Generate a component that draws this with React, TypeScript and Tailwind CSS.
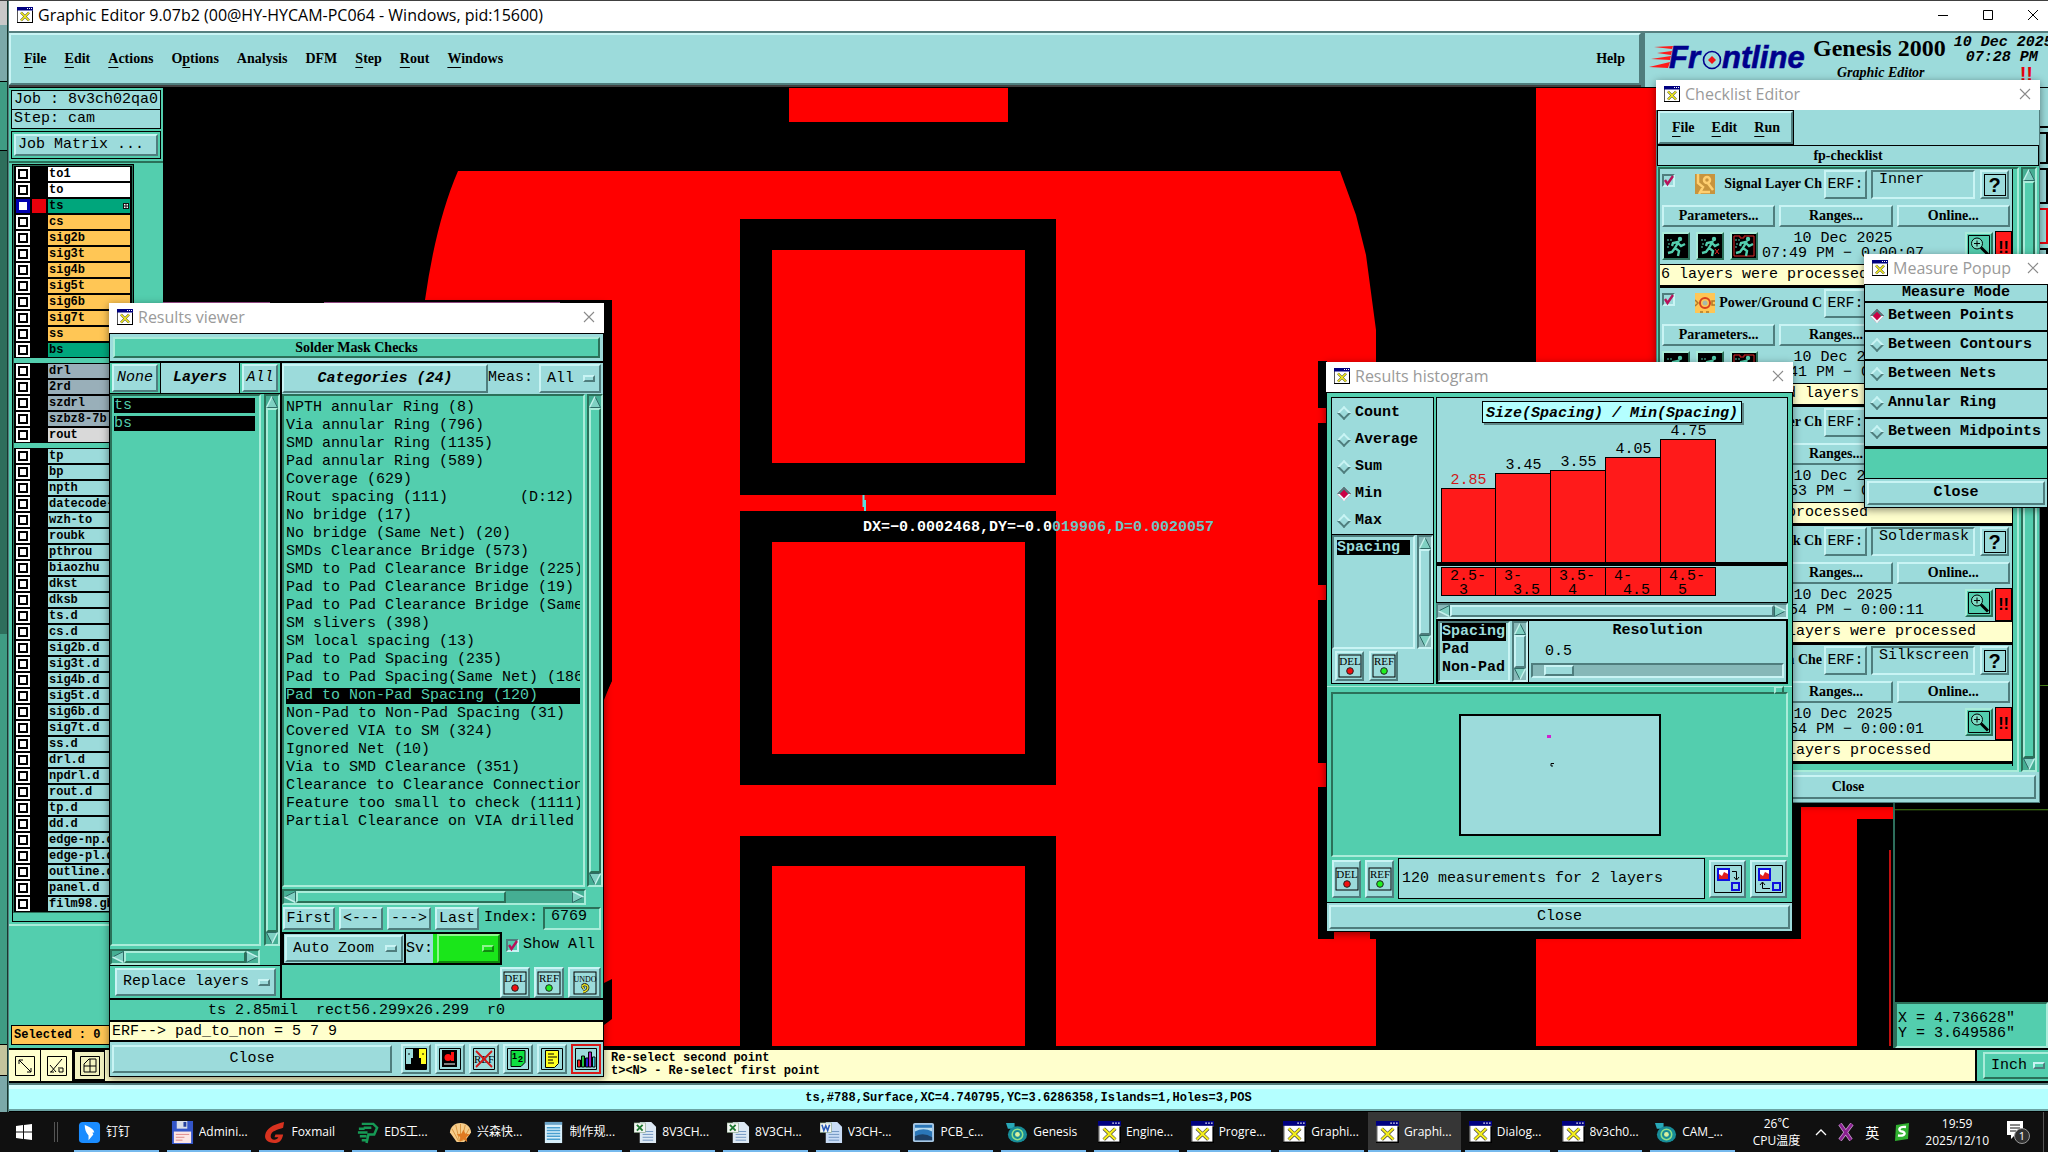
import type { ReactNode } from "react";
import { clsx } from "clsx";

const MONO = "[font-family:'Liberation_Mono','Noto_Sans_CJK_SC',monospace] text-[15px]";
const MONO_SM = "[font-family:'Liberation_Mono',monospace] text-[12px] font-bold";
const SERIF = "[font-family:'Liberation_Serif',serif] text-[14px] font-bold";
const UI = "[font-family:'Open_Sans','Noto_Sans_CJK_SC',sans-serif]";

// Motif style bevels
const RAISED = "border-2 border-t-[#c9f4f4] border-l-[#c9f4f4] border-b-[#4f7d7d] border-r-[#4f7d7d] bg-[#9cdbdb]";
const SUNKEN = "border-2 border-t-[#4f7d7d] border-l-[#4f7d7d] border-b-[#c9f4f4] border-r-[#c9f4f4]";
const RAISED_G = "border-2 border-t-[#a9ecd9] border-l-[#a9ecd9] border-b-[#2b7059] border-r-[#2b7059] bg-[#53ceae]";
const SUNKEN_G = "border-2 border-t-[#2b7059] border-l-[#2b7059] border-b-[#a9ecd9] border-r-[#a9ecd9]";

type Tone = "green" | "cyan";

/* ===== Shared pieces ===== */

function XIcon({ className = "h-4 w-4" }: { className?: string }) {
  return (
    <svg viewBox="0 0 16 16" className={className} preserveAspectRatio="none">
      <rect x="0.5" y="0.5" width="15" height="15" fill="#fff" stroke="#555" />
      <rect x="0" y="0" width="16" height="3.5" fill="#000080" />
      <path d="M10 1.5h1M12 1.5h1M14 1.5h1" stroke="#fff" />
      <path d="M4 5.5l8 8M12 5.5l-8 8" stroke="#333" strokeWidth="2.4" />
      <path d="M4 5.5l8 8M12 5.5l-8 8" stroke="#f4ee1c" strokeWidth="1.6" />
      <path d="M15.5 4v12M0 15.5h16" stroke="#000" />
    </svg>
  );
}

function AppWindow({ title, className, children }: { title: string; className: string; children: ReactNode }) {
  return (
    <section className={clsx("absolute flex flex-col shadow-[0_2px_8px_rgba(0,0,0,0.45)]", className)}>
      <header className="flex h-[30px] shrink-0 items-center gap-[5px] bg-white pb-[2px] pl-2">
        <XIcon />
        <h2 className={clsx(UI, "flex-1 text-[16px] leading-5 whitespace-nowrap text-[#9a9a9a]")}>{title}</h2>
        <button type="button" aria-label={`Close ${title}`} className="grid h-7 w-[30px] place-items-center">
          <svg viewBox="0 0 12 12" className="h-3 w-3">
            <path d="M1 1l10 10M11 1L1 11" stroke="#8a8a8a" strokeWidth="1.1" />
          </svg>
        </button>
      </header>
      {children}
    </section>
  );
}

function Arrow({ dir }: { dir: "up" | "down" | "left" | "right" }) {
  return (
    <svg
      viewBox="0 0 12 12"
      className={clsx(
        "h-3 w-3 shrink-0",
        dir === "down" && "rotate-180",
        dir === "left" && "-rotate-90",
        dir === "right" && "rotate-90",
      )}
    >
      <path d="M6 0.5L11.5 11.5H0.5z" fill="#7fd0c2" />
      <path d="M0.5 11.5H11.5L6 0.5" fill="none" stroke="#2f6b66" />
      <path d="M6 0.5L0.5 11.5" fill="none" stroke="#c4f2ec" strokeWidth="1.4" />
    </svg>
  );
}

function ScrollBar({
  horizontal = false,
  tone = "green",
  size = 100,
  className,
}: {
  horizontal?: boolean;
  tone?: Tone;
  size?: number;
  className?: string;
}) {
  const green = tone === "green";
  return (
    <div
      className={clsx(
        "flex shrink-0",
        horizontal ? "h-4" : "w-4 flex-col",
        green ? SUNKEN_G : SUNKEN,
        green ? "bg-[#45ae93]" : "bg-[#86b8b8]",
        className,
      )}
    >
      <Arrow dir={horizontal ? "left" : "up"} />
      <div className="min-h-0 min-w-0 flex-1">
        <div
          className={green ? RAISED_G : RAISED}
          style={horizontal ? { width: `${size}%`, height: "100%" } : { height: `${size}%`, width: "100%" }}
        />
      </div>
      <Arrow dir={horizontal ? "right" : "down"} />
    </div>
  );
}

function Btn({ className, children, label }: { className?: string; children: ReactNode; label?: string }) {
  return (
    <button
      type="button"
      aria-label={label}
      className={clsx("grid place-items-center leading-4 whitespace-nowrap", RAISED, className)}
    >
      {children}
    </button>
  );
}

function OptionMenu({
  label,
  options,
  className,
  tone = "cyan",
}: {
  label: string;
  options: string[];
  className: string;
  tone?: "cyan" | "green" | "lime";
}) {
  return (
    <span className={clsx("grid items-center", className)}>
      <select
        aria-label={label}
        className={clsx(
          "h-full w-full appearance-none truncate pl-[6px] leading-4 outline-none [grid-area:1/1]",
          tone === "cyan" && RAISED,
          tone === "green" && RAISED_G,
          tone === "lime" &&
            "border-2 border-t-[#8df58d] border-r-[#0f8a0f] border-b-[#0f8a0f] border-l-[#8df58d] bg-[#1ae61a]",
        )}
      >
        {options.map((o) => (
          <option key={o}>{o}</option>
        ))}
      </select>
      <span
        className={clsx(
          "pointer-events-none mr-[6px] h-[7px] w-3 justify-self-end border-2 [grid-area:1/1]",
          tone === "lime"
            ? "border-t-[#8df58d] border-r-[#0f8a0f] border-b-[#0f8a0f] border-l-[#8df58d]"
            : "border-t-[#c9f4f4] border-r-[#4f7d7d] border-b-[#4f7d7d] border-l-[#c9f4f4]",
        )}
      />
    </span>
  );
}

function Tick({ id, label }: { id: string; label?: string }) {
  return (
    <span className="grid h-[13px] w-[13px] shrink-0">
      <input
        id={id}
        type="checkbox"
        defaultChecked
        aria-label={label}
        className={clsx("h-[13px] w-[13px] appearance-none [grid-area:1/1]", SUNKEN)}
      />
      <svg viewBox="0 0 13 13" className="pointer-events-none h-[13px] w-[13px] [grid-area:1/1]">
        <path d="M3 6l2.5 4L11 2" fill="none" stroke="#b8125a" strokeWidth="2.4" />
      </svg>
    </span>
  );
}

function Radio({ name, label, checked = false }: { name: string; label: string; checked?: boolean }) {
  return (
    <label className="flex items-center gap-[6px] leading-[18px] font-bold">
      <input
        type="radio"
        name={name}
        defaultChecked={checked}
        className="ml-[3px] h-[10px] w-[10px] shrink-0 rotate-45 appearance-none border-2 border-t-[#c9f4f4] border-r-[#4f7d7d] border-b-[#4f7d7d] border-l-[#c9f4f4] checked:border-t-[#4f7d7d] checked:border-r-[#e9fbfb] checked:border-b-[#e9fbfb] checked:border-l-[#4f7d7d] checked:bg-[#cc0044]"
      />
      {label}
    </label>
  );
}

function StampIcon({ text, kind }: { text: string; kind: "red" | "green" | "undo" }) {
  return (
    <svg viewBox="0 0 24 24" className="h-6 w-6">
      <rect x="1" y="1" width="22" height="22" fill="none" stroke="#000" />
      <text
        x="12"
        y="11"
        textAnchor="middle"
        fontSize={text.length > 3 ? 8 : 11}
        fontFamily="Liberation Serif, serif"
        fill="#000"
      >
        {text}
      </text>
      {kind === "undo" ? (
        <>
          <path d="M9 15c3-3 8 0 5 4-1 1-2 2-4 2M9 15l3-2M9 15l2 3" fill="none" stroke="#222" strokeWidth="3" />
          <path d="M9 15c3-3 8 0 5 4-1 1-2 2-4 2M9 15l3-2M9 15l2 3" fill="none" stroke="#e8e020" strokeWidth="1.4" />
        </>
      ) : (
        <circle cx="12" cy="17" r="3.3" fill={kind === "red" ? "#f01010" : "#20f020"} stroke="#222" />
      )}
    </svg>
  );
}

function MenuWord({ text, hot = 0 }: { text: string; hot?: number | null }) {
  if (hot === null) return <button type="button">{text}</button>;
  return (
    <button type="button">
      {text.slice(0, hot)}
      <span className="underline underline-offset-4">{text[hot]}</span>
      {text.slice(hot + 1)}
    </button>
  );
}

/* ===== Main window header ===== */

function FrontlineLogo() {
  return (
    <svg viewBox="0 0 162 30" className="h-[30px] w-[162px] shrink-0" role="img" aria-label="Frontline">
      <path d="M5 4l19-1-1 3zM8 10l15-2-1 4zM2 16l20-3-1 4zM0 24l21-5-2 6z" fill="#ff1a1a" />
      <g
        fontFamily="Liberation Sans, sans-serif"
        fontWeight="bold"
        fontStyle="italic"
        fontSize="31"
        fill="#00008c"
        stroke="#00008c"
        strokeWidth="0.6"
      >
        <text x="20" y="25">Fr</text>
        <text x="73" y="25">ntline</text>
      </g>
      <circle cx="63" cy="17" r="8.5" fill="none" stroke="#00008c" strokeWidth="1.6" />
      <path d="M63 13l4 4-4 4-4-4z" fill="#f01515" />
    </svg>
  );
}

function MainHeader() {
  return (
    <>
      <header className="flex h-[30px] shrink-0 items-center gap-[5px] bg-white pb-[2px] pl-2">
        <XIcon />
        <h1 className={clsx(UI, "flex-1 text-[16px] leading-5 whitespace-nowrap text-black")}>
          Graphic Editor 9.07b2 (00@HY-HYCAM-PC064 - Windows, pid:15600)
        </h1>
        <div className="-mr-[7px] flex">
          <button type="button" aria-label="Minimize" className="grid h-7 w-[45px] place-items-center">
            <svg viewBox="0 0 12 12" className="h-3 w-3"><path d="M1 6.5h10" stroke="#000" /></svg>
          </button>
          <button type="button" aria-label="Maximize" className="grid h-7 w-[45px] place-items-center">
            <svg viewBox="0 0 12 12" className="h-3 w-3"><path d="M1.5 1.5h9v9h-9z" fill="none" stroke="#000" /></svg>
          </button>
          <button type="button" aria-label="Close" className="grid h-7 w-[45px] place-items-center">
            <svg viewBox="0 0 12 12" className="h-3 w-3"><path d="M1 1l10 10M11 1L1 11" stroke="#000" /></svg>
          </button>
        </div>
      </header>
      <div className="flex h-[57px] shrink-0 border-t-2 border-b border-t-[#567f7f] border-b-black">
        <nav className={clsx("mb-[2px] flex flex-1 items-center gap-[18px] pr-[14px] pb-[2px] pl-[13px]", SERIF, RAISED)}>
          <MenuWord text="File" />
          <MenuWord text="Edit" />
          <MenuWord text="Actions" />
          <MenuWord text="Options" hot={1} />
          <MenuWord text="Analysis" hot={null} />
          <MenuWord text="DFM" hot={null} />
          <MenuWord text="Step" />
          <MenuWord text="Rout" />
          <MenuWord text="Windows" />
          <span className="flex-1" />
          <MenuWord text="Help" hot={null} />
        </nav>
        <div className="flex w-[407px] gap-[2px] border-l-4 border-[#4f7d7d] bg-[#9cdbdb] pl-1">
          <div className="pt-[10px]">
            <FrontlineLogo />
          </div>
          <div className="shrink-0 [font-family:'Liberation_Serif',serif] font-bold whitespace-nowrap">
            <p className="text-[24px] leading-[30px]">Genesis 2000</p>
            <p className="pt-[2px] pl-6 text-[14px] leading-4 italic">Graphic Editor</p>
          </div>
          <div className={clsx(MONO, "pt-[2px] pl-[6px] leading-[15px] font-bold whitespace-nowrap italic")}>
            <p>10 Dec 2025</p>
            <p className="pl-3">07:28 PM</p>
            <p className="[font-family:'Liberation_Sans',sans-serif] pl-[66px] text-[20px] leading-[18px] text-red-600 not-italic">!!</p>
          </div>
        </div>
      </div>
    </>
  );
}

/* ===== Layer list ===== */

type Layer = { name: string; color: string; active?: boolean };

const LAYER_GROUPS: Layer[][] = [
  [
    { name: "to1", color: "bg-white" },
    { name: "to", color: "bg-white" },
    { name: "ts", color: "bg-[#00a67c]", active: true },
    ...["cs", "sig2b", "sig3t", "sig4b", "sig5t", "sig6b", "sig7t", "ss"].map((name) => ({
      name,
      color: "bg-[#ffc655]",
    })),
    { name: "bs", color: "bg-[#00a67c]" },
  ],
  [
    ...["drl", "2rd", "szdrl", "szbz8-7b"].map((name) => ({ name, color: "bg-[#99afb9]" })),
    { name: "rout", color: "bg-[#d9d9d9]" },
  ],
  [
    "tp", "bp", "npth", "datecode-", "wzh-to", "roubk", "pthrou", "biaozhu", "dkst", "dksb",
    "ts.d", "cs.d", "sig2b.d", "sig3t.d", "sig4b.d", "sig5t.d", "sig6b.d", "sig7t.d", "ss.d",
    "drl.d", "npdrl.d", "rout.d", "tp.d", "dd.d", "edge-np.d", "edge-pl.d", "outline.d",
    "panel.d", "film98.gb",
  ].map((name) => ({ name, color: "bg-[#9cdbdb]" })),
];

function LayerRow({ layer }: { layer: Layer }) {
  return (
    <li className="flex h-4 items-center gap-[2px] bg-black px-[2px]">
      <span className={clsx("grid h-[14px] w-[14px] place-items-center", layer.active ? "bg-[#0000b0]" : "bg-white")}>
        <input
          type="checkbox"
          aria-label={layer.name}
          className={clsx(
            "h-[10px] w-[10px] appearance-none bg-white",
            layer.active ? "border border-[#0000b0]" : "border-2 border-black",
          )}
        />
      </span>
      <span className={clsx("h-[14px] w-[14px]", layer.active ? "bg-red-600" : "bg-black")} />
      <span className={clsx(MONO_SM, "flex h-[14px] flex-1 items-center justify-between pr-[1px] pl-[1px] leading-[14px]", layer.color)}>
        {layer.name}
        {layer.active && (
          <svg viewBox="0 0 6 6" className="h-[6px] w-[6px]">
            <path d="M0 0h6v6H0z" fill="#111" />
            <path d="M1 1h1.5v1.5H1zM3.500 1H5v1.500H3.500zM1 3.500h1.500V5H1zM3.500 3.500H5V5H3.500z" fill="#fff" />
          </svg>
        )}
      </span>
    </li>
  );
}

function LayerPanel() {
  return (
    <aside className={clsx(MONO, "flex w-[154px] shrink-0 flex-col bg-[#53ceae]")}>
      <div className="flex flex-col border-b-2 border-[#2b7059] px-[2px] pt-[2px] pb-[2px]">
        <p className="h-5 border border-black bg-[#9cdbdb] pl-[2px] leading-[18px] whitespace-nowrap">Job : 8v3ch02qa0</p>
        <p className="-mt-px h-5 border border-black bg-[#9cdbdb] pl-[2px] leading-[18px]">Step: cam</p>
        <div className="mt-[2px] border border-black p-[2px]">
          <Btn className="h-[22px] w-full !justify-start pl-[2px]">Job Matrix ...</Btn>
        </div>
      </div>
      <div className="mt-px ml-[3px] w-[122px] border border-black pb-2">
        <div className="flex flex-col gap-[5px] border border-[#2b7059]">
          {LAYER_GROUPS.map((group, i) => (
            <ul key={i}>
              {group.map((l) => (
                <LayerRow key={l.name} layer={l} />
              ))}
            </ul>
          ))}
        </div>
      </div>
      <div className="mt-[2px] flex-1 border-t-2 border-[#a9ecd9]" />
      <div className="p-[2px] pb-[3px]">
        <p className={clsx(MONO_SM, "h-5 border border-black bg-[#ffc655] pl-[2px] leading-[18px]")}>Selected : 0</p>
      </div>
    </aside>
  );
}

/* ===== Board view ===== */

function BoardCanvas() {
  return (
    <div className="relative min-w-0 flex-1 overflow-hidden bg-black">
      <svg viewBox="163 88 1730 960" preserveAspectRatio="xMinYMin slice" className="h-full w-full">
        <rect x="163" y="88" width="1731" height="960" fill="#000" />
        <g fill="#ff0000">
          <rect x="789" y="88" width="219" height="34" />
          <path d="M458 171H1340L1356 215L1366 255L1376 330V1046H604V700L612 680V300H425Q436 222 458 171z" />
          <rect x="1536" y="88" width="358" height="958" />
        </g>
        <path d="M604 303h8v378l-8 16zM604 983l8 -4v40l-8 6z" fill="#000" />
        {/* solder mask openings */}
        <path
          d="M740 219h316v276H740zM772 250v213h253V250zM740 511h316v274H740zM772 542v212h253V542zM740 836h316v211H740zM772 866v181h253V866z"
          fill="#000"
          fillRule="evenodd"
        />
        <path d="M1318 361h9v47h-9zM1318 423h9v162h-9zM1318 600h9v163h-9zM1318 787h483v152h-483z" fill="#000" />
        <rect x="1334" y="925" width="36" height="14" fill="#ff0000" />
        <path d="M1376 938h160v108h-160zM1780 790h114v17h-93v120h-21zM1857 819h37v227h-37z" fill="#000" />
        <rect x="1889" y="850" width="2" height="196" fill="#c01010" />
        <path d="M163 302.500h107M324 302.500h236" stroke="#a05090" />
        {/* measured gap */}
        <path d="M863.500 495v12M865 500v11" stroke="#5ae0e0" strokeWidth="2" />
      </svg>
      <p className={clsx(MONO, "absolute top-[431px] left-[700px] leading-[18px] font-bold whitespace-nowrap text-white")}>
        DX=−0.0002468,DY=−0.0<span className="text-[#70c4c4]">019906,D=0.0020057</span>
      </p>
    </div>
  );
}

function RightDock() {
  return (
    <aside className="flex w-[155px] shrink-0 flex-col border-l-2 border-[#2e6e5c] bg-black">
      <div className="flex flex-col gap-1 bg-[#9cdbdb]">
        <div className="h-10 border-b-2 border-black" />
        <div className="h-8 border-2 border-black" />
        <div className="h-9 border-2 border-black" />
        <div className="h-9 border-2 border-red-600" />
        <div className="h-9 border-2 border-black" />
      </div>
      <svg viewBox="0 0 155 700" preserveAspectRatio="none" className="min-h-0 w-full flex-1">
        <path d="M0 512.500h155M0 391.500h155" stroke="#4c8a1c" />
      </svg>
      <div className={clsx(MONO, "h-[46px] bg-[#53ceae] pt-[7px] pl-px leading-[15px]", SUNKEN_G)}>
        <p>X = 4.736628&quot;</p>
        <p>Y = 3.649586&quot;</p>
      </div>
    </aside>
  );
}

const FOOT_TOOLS = [
  { label: "Zoom window", d: "M4 4l12 12M4 4v4M4 4h4M16 16v-4M16 16h-4" },
  { label: "Snap", d: "M4 16L15 3M3 9l6 7M3 16h4M11 12h5v4h-4v-3" },
  { label: "Grid", d: "M10 3v13M4 10h12M4 8l5-5h7v13H4z" },
];

function FootBar() {
  return (
    <footer className="shrink-0">
      <div className="flex h-[35px] border-y-2 border-black bg-[#ffffcd]">
        {FOOT_TOOLS.map((t) => (
          <button
            key={t.label}
            type="button"
            aria-label={t.label}
            className={clsx(
              "grid w-8 place-items-center border-r border-black",
              t.label === "Grid" && "border-2 border-[#53ceae] bg-[#f2f2c0]",
            )}
          >
            <svg viewBox="0 0 20 20" className="h-5 w-5">
              <path d="M0.500 0.500h19v19h-19z" fill="none" stroke="#000" />
              <path d={t.d} fill="none" stroke="#000" />
            </svg>
          </button>
        ))}
        <div className={clsx(MONO_SM, "flex-1 pl-[506px] leading-[13px] whitespace-pre")}>
          <p className="pt-[2px]">Re-select second point</p>
          <p>t&gt;&lt;N&gt; - Re-select first point</p>
        </div>
        <div className={clsx(MONO, "w-[73px] overflow-hidden border-l-2 border-black bg-[#53ceae] py-[2px] pl-[6px]")}>
          <OptionMenu label="Units" options={["Inch", "MM"]} className="h-[27px] w-[68px]" tone="green" />
        </div>
      </div>
      <div className="border-t-2 border-b border-t-[#567f7f] border-b-black">
        <p className={clsx(MONO_SM, "h-[26px] border-t-4 border-b-2 border-t-[#d8ffff] border-b-[#6ba3a3] bg-[#b4ffff] text-center leading-[18px]")}>
          ts,#788,Surface,XC=4.740795,YC=3.6286358,Islands=1,Holes=3,POS
        </p>
      </div>
    </footer>
  );
}

/* ===== Results viewer ===== */

const CATEGORIES = [
  "NPTH annular Ring (8)",
  "Via annular Ring (796)",
  "SMD annular Ring (1135)",
  "Pad annular Ring (589)",
  "Coverage (629)",
  "Rout spacing (111)        (D:12)",
  "No bridge (17)",
  "No bridge (Same Net) (20)",
  "SMDs Clearance Bridge (573)",
  "SMD to Pad Clearance Bridge (225)",
  "Pad to Pad Clearance Bridge (19)",
  "Pad to Pad Clearance Bridge (Same Net)",
  "SM slivers (398)",
  "SM local spacing (13)",
  "Pad to Pad Spacing (235)",
  "Pad to Pad Spacing(Same Net) (186)",
  "Pad to Non-Pad Spacing (120)",
  "Non-Pad to Non-Pad Spacing (31)",
  "Covered VIA to SM (324)",
  "Ignored Net (10)",
  "Via to SMD Clearance (351)",
  "Clearance to Clearance Connection",
  "Feature too small to check (1111)",
  "Partial Clearance on VIA drilled ",
];

function ViewerTools() {
  return (
    <div className="flex h-[34px] items-center gap-1 bg-[#9cdbdb] px-[2px]">
      <Btn className="h-7 flex-1">Close</Btn>
      <span className="w-px" />
      <Btn className="h-[30px] w-[30px]" label="Compare">
        <svg viewBox="0 0 22 22" className="h-[22px] w-[22px]">
          <path d="M.5.5h21v21H.5z" fill="#9cdbdb" stroke="#000" />
          <path d="M11 1h10v20H11z" fill="#ffff20" />
          <path d="M8 1h6v9h2v6h5v5H1v-5h5v-6h2z" />
          <path d="M4 5v2M18 5v2" stroke="#000" />
        </svg>
      </Btn>
      <Btn className="h-[30px] w-[30px]" label="Snapshot">
        <svg viewBox="0 0 22 22" className="h-[22px] w-[22px]">
          <path d="M.5.5h21v21H.5z" fill="#9cdbdb" stroke="#000" />
          <path d="M3 2h15v17H3z" />
          <circle cx="9" cy="9.500" r="3.500" fill="#f11" />
          <path d="M12 4h3v9h-3z" fill="#f11" />
          <path d="M5 16h11" stroke="#fff" />
        </svg>
      </Btn>
      <Btn className="h-[30px] w-[30px]" label="Clear reference">
        <svg viewBox="0 0 22 22" className="h-[22px] w-[22px]">
          <path d="M.5.5h21v21H.5z" fill="none" stroke="#000" />
          <text x="11" y="15" textAnchor="middle" fontSize="11" fontFamily="Liberation Serif, serif">REF</text>
          <path d="M3 3l16 16M19 3L3 19" stroke="#d01818" strokeWidth="1.800" />
        </svg>
      </Btn>
      <Btn className="h-[30px] w-[30px]" label="Swap">
        <svg viewBox="0 0 22 22" className="h-[22px] w-[22px]">
          <path d="M.5.5h21v21H.5z" fill="none" stroke="#000" />
          <path d="M4 2.500h14v12l-4 4H4z" fill="#10e040" stroke="#000" />
          <g fontSize="9" fontWeight="bold" fontFamily="Liberation Sans, sans-serif">
            <text x="5" y="11">1</text>
            <text x="11" y="14">2</text>
          </g>
        </svg>
      </Btn>
      <Btn className="h-[30px] w-[30px]" label="Report">
        <svg viewBox="0 0 22 22" className="h-[22px] w-[22px]">
          <path d="M.5.5h21v21H.5z" fill="none" stroke="#000" />
          <path d="M4.500 2.500h13v13l-4 4h-9z" fill="#ffff20" stroke="#000" />
          <path d="M7 6h6M7 9h9M7 12h5M7 15h6" stroke="#000" />
        </svg>
      </Btn>
      <Btn className="h-[30px] w-[30px] !border-[#d81818]" label="Histogram">
        <svg viewBox="0 0 22 22" className="h-[22px] w-[22px]">
          <path d="M.5.5h21v21H.5z" fill="none" stroke="#000" />
          <path d="M2.500 12h3v7h-3z" fill="#e02020" stroke="#000" />
          <path d="M6.500 8h3v11h-3z" fill="#20c040" stroke="#000" />
          <path d="M10.500 10h3v9h-3z" fill="#2020d0" stroke="#000" />
          <path d="M13.500 4h3v15h-3z" fill="#b020c0" stroke="#000" />
          <path d="M17.500 9h2.500v10h-2.500z" fill="#40d8e8" stroke="#000" />
        </svg>
      </Btn>
    </div>
  );
}

function ResultsViewer() {
  return (
    <AppWindow title="Results viewer" className="top-[303px] left-[109px] w-[495px]">
      <div className={clsx(MONO, "border border-black bg-[#53ceae]")}>
        <div className="border-b-2 border-black bg-[#9cdbdb] p-[3px]">
          <h3 className={clsx(SERIF, RAISED_G, "h-[21px] text-center leading-[17px]")}>Solder Mask Checks</h3>
        </div>
        <div className="flex border-b-2 border-black">
          {/* layers column */}
          <div className="flex w-[172px] flex-col border-r-2 border-black">
            <div className="flex h-[31px] items-center border-b border-black italic">
              <Btn className="mx-[2px] h-[28px] w-[46px]">None</Btn>
              <p className="h-full flex-1 border-x border-black bg-[#9cdbdb] text-center leading-[30px] font-bold">Layers</p>
              <Btn className="mx-[2px] h-[28px] w-9">All</Btn>
            </div>
            <div className="flex flex-1 justify-between">
              <ul className={clsx("flex w-[151px] flex-col gap-[3px] p-[2px] pr-1", SUNKEN_G)}>
                {["ts", "bs"].map((l) => (
                  <li key={l} className="h-[15px] bg-black leading-[15px] text-[#53ceae]">{l}</li>
                ))}
              </ul>
              <ScrollBar />
            </div>
            <ScrollBar horizontal className="mt-[3px] w-[150px]" />
            <div className="border-t border-black px-1 py-[2px] pl-[5px]">
              <OptionMenu label="Layer mode" options={["Replace layers", "Add layers"]} className="h-7 w-full" />
            </div>
          </div>

          {/* categories column */}
          <div className="flex min-w-0 flex-1 flex-col">
            <div className="flex h-[31px] items-center bg-[#9cdbdb]">
              <Btn className="h-[29px] w-[206px] font-bold italic">Categories (24)</Btn>
              <span className="w-[51px]">Meas:</span>
              <OptionMenu label="Meas:" options={["All", "Min"]} className="h-[29px] w-[62px]" />
            </div>
            <div className="flex justify-between">
              <ul className={clsx("h-[493px] w-[303px] overflow-hidden pt-[3px] pr-[3px] pl-[2px]", SUNKEN_G)}>
                {CATEGORIES.map((c) => {
                  const selected = c.startsWith("Pad to Non-Pad");
                  return (
                    <li key={c} className="h-[18px] overflow-hidden py-[1px]">
                      <span className={clsx("block leading-4 whitespace-pre", selected && "bg-black text-[#53ceae]")}>{c}</span>
                    </li>
                  );
                })}
              </ul>
              <ScrollBar />
            </div>
            <ScrollBar horizontal size={76} className="mt-[2px] w-[304px]" />
            <div className="mt-[2px] flex items-center gap-1 pr-[2px] pl-[1px]">
              <Btn className="h-[23px] w-[52px]">First</Btn>
              <Btn className="h-[23px] w-11">{"<---"}</Btn>
              <Btn className="h-[23px] w-11">{"--->"}</Btn>
              <Btn className="h-[23px] w-11">Last</Btn>
              <label htmlFor="result-index" className="pr-px pl-px">Index:</label>
              <input
                id="result-index"
                defaultValue="6769"
                className={clsx("h-[23px] min-w-0 flex-1 bg-transparent pb-1 pl-[6px] leading-4 outline-none", SUNKEN_G)}
              />
            </div>
            <div className="mt-[2px] flex h-[33px]">
              <div className="w-[124px] border-2 border-black bg-[#9cdbdb] p-px">
                <OptionMenu label="Zoom mode" options={["Auto Zoom", "No Zoom"]} className="h-full w-full" />
              </div>
              <span className="w-[27px] border-y-2 border-black bg-[#9cdbdb] text-center leading-[29px]">Sv:</span>
              <div className="w-[69px] border-y-2 border-r-2 border-black bg-[#1ae61a] pl-1">
                <OptionMenu label="Sv:" options={[""]} className="h-full w-full" tone="lime" />
              </div>
              <label htmlFor="show-all" className="flex items-center gap-1 pb-[6px] pl-1">
                <Tick id="show-all" />
                Show All
              </label>
            </div>
            <div className="mt-[2px] flex justify-end gap-1 pr-[2px]">
              <Btn className="h-[31px] w-[30px]" label="Delete"><StampIcon text="DEL" kind="red" /></Btn>
              <Btn className="h-[31px] w-[30px]" label="Reference"><StampIcon text="REF" kind="green" /></Btn>
              <Btn className="h-[31px] w-[33px]" label="Undo"><StampIcon text="UNDO" kind="undo" /></Btn>
            </div>
          </div>
        </div>
        <p className="h-[20px] text-center leading-[21px] whitespace-pre">ts 2.85mil  rect56.299x26.299  r0</p>
        <p className="h-[22px] border-y-2 border-black bg-[#ffffcd] pl-[2px] leading-[19px]">{"ERF--> pad_to_non = 5 7 9"}</p>
        <ViewerTools />
      </div>
    </AppWindow>
  );
}

/* ===== Checklist editor ===== */

type CheckItem = { id: string; label: string; erf: string; time: string; status: string; icon: "signal" | "power" };

const CHECKS: CheckItem[] = [
  { id: "signal", label: "Signal Layer Ch", erf: "Inner", time: "07:49 PM − 0:00:07", status: "6 layers were processed", icon: "signal" },
  { id: "power", label: "Power/Ground C", erf: "Inner", time: "07:41 PM − 0:00:04", status: "No power/ground layers", icon: "power" },
  { id: "drill", label: "Drill Layer Ch", erf: "Drill", time: "07:53 PM − 0:00:02", status: "1 drill layer processed", icon: "signal" },
  { id: "mask", label: "Solder Mask Ch", erf: "Soldermask", time: "07:54 PM − 0:00:11", status: "2 solder mask layers were processed", icon: "power" },
  { id: "silk", label: "Silk Screen Che", erf: "Silkscreen", time: "07:54 PM − 0:00:01", status: "2 silk screen layers processed", icon: "signal" },
];

function RunIcon({ variant }: { variant: number }) {
  return (
    <svg viewBox="0 0 24 24" className="h-6 w-6">
      <path d="M0 0h24v24H0z" fill="#000" />
      {variant === 2 && <path d="M2 2h6v2h4V2h10v20H2z" fill="none" stroke="#e02828" />}
      <circle cx="16" cy="5" r="2.200" fill="#53ceae" />
      <path d="M15 7l-4 7 4 3-1 5M11 14l-3 4-4 1M14 8l-5 1-1 3M14 9l3 3 4-2" fill="none" stroke="#53ceae" strokeWidth="2.400" />
      <path d="M3 6h2M6 6h2M4 10h2M3 13h2" stroke="#53ceae" />
      {variant === 1 && <path d="M17 15l4 5M21 15l-4 5" stroke="#e02828" />}
    </svg>
  );
}

function CheckRow({ item }: { item: CheckItem }) {
  return (
    <li className="bg-[#9cdbdb] pt-px">
      <div className="flex h-[30px] pl-[2px]">
        <div className="flex w-[160px] items-start overflow-hidden pt-1">
          <Tick id={`check-${item.id}`} label={item.label} />
          <svg viewBox="0 0 20 20" className="ml-5 h-5 w-5 shrink-0">
            <path d="M0 0h20v20H0z" fill={item.icon === "signal" ? "#c8943c" : "#ffc655"} />
            {item.icon === "signal" ? (
              <path d="M3 0v9l5 4-4 7M12 8l6 8M6 18h9M12 3a3 3 0 100 6 3 3 0 000-6" fill="none" stroke="#ffcf70" strokeWidth="2.500" />
            ) : (
              <>
                <circle cx="10" cy="10" r="5" fill="#ffc655" stroke="#d8401c" strokeWidth="2" />
                <circle cx="10" cy="10" r="2.500" fill="#a8b8a8" />
                <path d="M0 7l3 3-3 3M20 8h-3v4h3M5 19h3M11 19h3" fill="none" stroke="#b07828" strokeWidth="1.500" />
              </>
            )}
          </svg>
          <span className={clsx(SERIF, "min-w-0 flex-1 overflow-hidden text-right leading-5 whitespace-nowrap")}>{item.label}</span>
        </div>
        <Btn className="ml-[2px] h-[29px] w-[43px]">ERF:</Btn>
        <input
          aria-label={`${item.label} ERF`}
          defaultValue={item.erf}
          className={clsx("ml-1 h-[29px] w-[104px] bg-transparent pb-[10px] pl-[6px] leading-4 outline-none", SUNKEN)}
        />
        <Btn className="ml-[5px] h-[29px] w-[29px]" label="Help">
          <span className="h-[22px] w-[22px] border border-black [font-family:'Liberation_Sans',sans-serif] text-[20px] leading-5 font-bold">?</span>
        </Btn>
      </div>
      <div className={clsx(SERIF, "mt-[5px] flex gap-1 px-[2px]")}>
        <Btn className="h-[22px] flex-1">Parameters...</Btn>
        <Btn className="h-[22px] flex-1">Ranges...</Btn>
        <Btn className="h-[22px] flex-1">Online...</Btn>
      </div>
      <div className="mt-1 flex h-[33px] pl-[2px]">
        {[0, 1, 2].map((v) => (
          <button key={v} type="button" aria-label={`Run mode ${v + 1}`} className={clsx("mt-px mr-[6px] grid h-[28px] w-[28px] place-items-center", RAISED_G)}>
            <RunIcon variant={v} />
          </button>
        ))}
        <p className="-ml-[2px] w-[162px] text-center leading-[15px] whitespace-nowrap">
          10 Dec 2025
          <br />
          {item.time}
        </p>
        <span className="flex-1" />
        <button type="button" aria-label="Inspect" className={clsx("mt-px grid h-[28px] w-[28px] place-items-center", RAISED_G)}>
          <svg viewBox="0 0 22 22" className="h-[22px] w-[22px]">
            <path d="M.5.5h21v21H.5z" fill="none" stroke="#000" />
            <circle cx="9" cy="8.500" r="5.500" fill="#7fdcc4" stroke="#000" />
            <path d="M6 8.500h6M9 5.500v6" stroke="#000" />
            <path d="M13 12.500l7 7" stroke="#000" strokeWidth="3" />
          </svg>
        </button>
        <span className="ml-[2px] grid w-[17px] place-items-center border border-black bg-[#ff1a1a] [font-family:'Liberation_Sans',sans-serif] text-[16px] font-bold">!!</span>
      </div>
      <p className="h-6 overflow-hidden border-t border-b-3 border-black bg-[#ffffcd] pl-px leading-5 whitespace-nowrap">{item.status}</p>
    </li>
  );
}

function ChecklistEditor() {
  return (
    <AppWindow title="Checklist Editor" className="top-[80px] left-[1656px] w-[384px]">
      <div className={clsx(MONO, "border-x border-b border-[#4f7d7d] bg-[#9cdbdb]")}>
        <nav className={clsx(SERIF, "flex h-[35px] w-[137px] items-center border border-black")}>
          <div className={clsx("flex h-full w-full items-center gap-[17px] pl-3", RAISED)}>
            <MenuWord text="File" />
            <MenuWord text="Edit" />
            <MenuWord text="Run" />
          </div>
        </nav>
        <p className={clsx(SERIF, "h-[21px] border border-black text-center leading-[19px]")}>fp-checklist</p>
        <div className="flex justify-between bg-[#53ceae] pt-px pr-[2px] pl-px">
          <div className={clsx("w-[361px] pb-1", SUNKEN_G)}>
            <ul className="w-[353px] border-r border-black pb-[2px]">
              {CHECKS.map((c) => (
                <CheckRow key={c.id} item={c} />
              ))}
            </ul>
          </div>
          <ScrollBar size={100} />
        </div>
        <div className="p-[3px]">
          <Btn className={clsx(SERIF, "h-[24px] w-full")}>Close</Btn>
        </div>
      </div>
    </AppWindow>
  );
}

/* ===== Histogram ===== */

const BINS = [
  { value: 2.85, from: "2.5-", to: "3" },
  { value: 3.45, from: "3-", to: "3.5" },
  { value: 3.55, from: "3.5-", to: "4" },
  { value: 4.05, from: "4-", to: "4.5" },
  { value: 4.75, from: "4.5-", to: "5" },
];

function SpacingChart() {
  return (
    <div className="flex h-[206px] flex-col border border-black bg-[#9cdbdb]">
      <h3 className="mt-[3px] h-[22px] w-[260px] self-center border border-black bg-[#b4ffff] text-center leading-6 font-bold italic shadow-[2px_2px_0_#5f8888]">
        Size(Spacing) / Min(Spacing)
      </h3>
      <div className="flex flex-1 items-end border-b-4 border-black pl-1">
        {BINS.map((b, i) => (
          <div key={b.from} className="w-[55px] text-center">
            <p className={clsx("leading-[15px]", i === 0 && "text-[#d01818]")}>{b.value}</p>
            <div
              className={clsx("border border-b-0 border-black bg-[#ff1a1a]", i > 0 && "-ml-px")}
              style={{ height: Math.round((b.value / 4.75) * 123) }}
            />
          </div>
        ))}
      </div>
      <div className="mt-px mb-[6px] flex pl-1">
        {BINS.map((b, i) => (
          <p key={b.from} className={clsx("h-[29px] border border-black bg-[#ff1a1a] pt-[2px] pl-2 leading-[14px] whitespace-pre", i > 0 ? "-ml-px w-[56px]" : "w-[55px]")}>
            {b.from}
            <br />
            {` ${b.to}`}
          </p>
        ))}
      </div>
    </div>
  );
}

function TransferIcon({ back = false }: { back?: boolean }) {
  return (
    <svg viewBox="0 0 28 28" className="h-7 w-7">
      <path d="M.5.5h27v27H.5z" fill="none" stroke="#000" />
      <path d="M4 4h11v11H4z" fill="#fff" stroke="#1010e0" strokeWidth="2" />
      <path d="M5 14V9l3 2 2-4 4 2v5z" fill="#e02020" />
      <path d="M18 18h7v7h-7z" fill="none" stroke="#1010e0" strokeWidth="2" />
      <path d={back ? "M15 23.500H7.500v-6M5 20l2.500-3 2.500 3" : "M18 6.500h4.500v8M20 12l2.500 3 2.500-3"} fill="none" stroke="#000" />
    </svg>
  );
}

function ResultsHistogram() {
  return (
    <AppWindow title="Results histogram" className="top-[362px] left-[1326px] w-[467px]">
      <div className={clsx(MONO, "border border-black bg-[#53ceae]")}>
        <div className="flex gap-[2px] px-1 pt-1 pb-[2px]">
          <div className="flex w-[103px] flex-col border border-black bg-[#9cdbdb]">
            <fieldset className="flex flex-col gap-[9px] border-b border-black pt-[6px] pb-[4px] pl-1">
              <legend className="sr-only">Statistic</legend>
              {["Count", "Average", "Sum", "Min", "Max"].map((s) => (
                <Radio key={s} name="statistic" label={s} checked={s === "Min"} />
              ))}
            </fieldset>
            <div className="flex h-[114px] justify-between">
              <ul className={clsx("w-[83px] p-[3px] font-bold", SUNKEN)}>
                <li className="h-[15px] bg-black leading-[15px] text-[#9cdbdb]">Spacing</li>
              </ul>
              <ScrollBar tone="cyan" />
            </div>
            <div className="flex gap-[5px] px-[3px] py-[2px]">
              <Btn className="h-[30px] w-[29px]" label="Delete"><StampIcon text="DEL" kind="red" /></Btn>
              <Btn className="h-[30px] w-[29px]" label="Reference"><StampIcon text="REF" kind="green" /></Btn>
            </div>
          </div>
          <div className="flex min-w-0 flex-1 flex-col">
            <SpacingChart />
            <ScrollBar tone="cyan" horizontal />
            <div className="flex flex-1 border-2 border-black bg-[#9cdbdb]">
              <ul className={clsx("w-[72px] overflow-hidden px-[2px] font-bold", SUNKEN)}>
                {["Spacing", "Pad", "Non-Pad"].map((l) => (
                  <li key={l} className={clsx("h-[18px] leading-[18px]", l === "Spacing" && "bg-black text-[#9cdbdb]")}>{l}</li>
                ))}
              </ul>
              <ScrollBar tone="cyan" className="ml-[2px]" />
              <div className="flex flex-1 flex-col border-l border-black px-[2px] pb-px">
                <label htmlFor="resolution" className="text-center leading-[20px] font-bold">Resolution</label>
                <output htmlFor="resolution" className="pl-[14px] leading-[22px]">0.5</output>
                <input
                  id="resolution"
                  type="range"
                  min="0"
                  max="10"
                  step="0.5"
                  defaultValue="0.5"
                  className={clsx(
                    "h-[15px] w-full appearance-none bg-[#86b8b8] [&::-webkit-slider-thumb]:h-[11px] [&::-webkit-slider-thumb]:w-[30px] [&::-webkit-slider-thumb]:appearance-none [&::-webkit-slider-thumb]:border-2 [&::-webkit-slider-thumb]:border-t-[#c9f4f4] [&::-webkit-slider-thumb]:border-r-[#4f7d7d] [&::-webkit-slider-thumb]:border-b-[#4f7d7d] [&::-webkit-slider-thumb]:border-l-[#c9f4f4] [&::-webkit-slider-thumb]:bg-[#9cdbdb]",
                    SUNKEN,
                  )}
                />
              </div>
            </div>
          </div>
        </div>
        <div className="flex h-[6px] items-center justify-end border-t border-[#a9ecd9] pr-2">
          <span className={clsx("h-2 w-[10px]", RAISED_G)} />
        </div>
        <div className={clsx("mx-1 grid h-[165px] place-items-center", SUNKEN_G)}>
          <svg viewBox="0 0 202 122" className="h-[122px] w-[202px]">
            <rect x="1" y="1" width="200" height="120" fill="#9cdbdb" stroke="#000" strokeWidth="2" />
            <rect x="88" y="21" width="4" height="3" fill="#d020d0" />
            <path d="M95 49.500h-3v2.500h2" fill="none" stroke="#000" />
          </svg>
        </div>
        <div className="flex h-[46px] items-center gap-1 border-b border-black px-[5px] pb-[2px]">
          <Btn className="h-[38px] w-[29px]" label="Delete"><StampIcon text="DEL" kind="red" /></Btn>
          <Btn className="h-[38px] w-[29px]" label="Reference"><StampIcon text="REF" kind="green" /></Btn>
          <p className="h-[41px] flex-1 border border-black bg-[#9cdbdb] pl-[3px] leading-[39px]">120 measurements for 2 layers</p>
          <Btn className="h-[38px] w-[37px]" label="Send"><TransferIcon /></Btn>
          <Btn className="h-[38px] w-[37px]" label="Fetch"><TransferIcon back /></Btn>
        </div>
        <div className="bg-[#9cdbdb] p-[2px]">
          <Btn className="h-6 w-full">Close</Btn>
        </div>
      </div>
    </AppWindow>
  );
}

/* ===== Measure popup ===== */

function MeasurePopup() {
  return (
    <AppWindow title="Measure Popup" className="top-[254px] left-[1864px] w-[184px]">
      <fieldset className={clsx(MONO, "border border-black bg-[#9cdbdb]")}>
        <legend className="float-left w-full text-center leading-[16px] font-bold">Measure Mode</legend>
        {["Points", "Contours", "Nets", "Annular Ring", "Midpoints"].map((m) => (
          <div key={m} className="clear-both h-[29px] border-t-2 border-black pt-1 pl-1">
            <Radio name="measure" label={m === "Annular Ring" ? m : `Between ${m}`} checked={m === "Points"} />
          </div>
        ))}
      </fieldset>
      <div className={clsx(MONO, "border border-t-2 border-black bg-[#53ceae] pt-[29px]")}>
        <div className="border-t border-black bg-[#9cdbdb] p-[2px]">
          <Btn className="h-6 w-full font-bold">Close</Btn>
        </div>
      </div>
    </AppWindow>
  );
}

/* ===== Taskbar ===== */

type TaskIcon = "ding" | "floppy" | "fox" | "eds" | "shell" | "note" | "xls" | "doc" | "pic" | "genesis" | "x";

const TASKS: { label: string; icon: TaskIcon; active?: boolean }[] = [
  { label: "钉钉", icon: "ding" },
  { label: "Admini...", icon: "floppy" },
  { label: "Foxmail", icon: "fox" },
  { label: "EDS工...", icon: "eds" },
  { label: "兴森快...", icon: "shell" },
  { label: "制作规...", icon: "note" },
  { label: "8V3CH...", icon: "xls" },
  { label: "8V3CH...", icon: "xls" },
  { label: "V3CH-...", icon: "doc" },
  { label: "PCB_c...", icon: "pic" },
  { label: "Genesis", icon: "genesis" },
  { label: "Engine...", icon: "x" },
  { label: "Progre...", icon: "x" },
  { label: "Graphi...", icon: "x" },
  { label: "Graphi...", icon: "x", active: true },
  { label: "Dialog...", icon: "x" },
  { label: "8v3ch0...", icon: "x" },
  { label: "CAM_...", icon: "genesis" },
];

function TaskGlyph({ icon }: { icon: TaskIcon }) {
  if (icon === "x") return <XIcon className="h-[22px] w-[23px] shrink-0" />;
  return (
    <svg viewBox="0 0 24 24" className="h-[23px] w-[23px] shrink-0">
      {icon === "ding" && (
        <>
          <rect x="1" y="1" width="22" height="22" rx="4" fill="#1a8cff" />
          <path d="M7 4c3 2 9 3 10 8h-2l1 2-5 6v-5c-3-3-4-7-4-11z" fill="#fff" />
        </>
      )}
      {icon === "floppy" && (
        <>
          <path d="M1 0h22v24H1z" fill="#3355c8" />
          <path d="M6 0h11v8H6z" fill="#d8dde8" />
          <path d="M13 1h3v5h-3z" fill="#24409c" />
          <path d="M3 11h18v12H3z" fill="#fbe6e6" />
          <path d="M5 14h14M5 17h9M5 20h7" stroke="#d88" />
        </>
      )}
      {icon === "fox" && (
        <path d="M22 1c-9 2-16 5-19 11-3 7 2 11 9 11 5 0 8-3 9-9h-8l-1 3h4c-1 3-8 4-8-1 0-6 8-7 13-9z" fill="#d8321f" />
      )}
      {icon === "eds" && (
        <path d="M6 3h12l4 4-3 7h-6l-2 9M8 7h8M3 8h6M2 12h10M4 16h7M6 20h5" fill="none" stroke="#169a55" strokeWidth="2.600" />
      )}
      {icon === "shell" && (
        <>
          <path d="M12 2c7 0 11 5 11 10l-7 10H8L1 12C1 7 5 2 12 2z" fill="#f7cd8a" />
          <path d="M12 3v18M7 4l4 17M17 4l-4 17M3 8l7 13M21 8l-7 13" stroke="#d69440" />
          <path d="M15 9l2 4 5 1-4 3 1 5-4-3-4 3 1-5-4-3 5-1z" fill="#e07a22" />
        </>
      )}
      {icon === "note" && (
        <>
          <path d="M3 1h18v22H3z" fill="#d8f0fb" />
          <path d="M3 1h18v3H3z" fill="#6ba4c8" />
          <path d="M5 7h14M5 10h14M5 13h14M5 16h14M5 19h14" stroke="#4a9fd0" strokeWidth="1.500" />
        </>
      )}
      {(icon === "xls" || icon === "doc") && (
        <>
          <path d="M6 1h12l5 5v17H6z" fill={icon === "xls" ? "#dde9f4" : "#c9dcf5"} />
          <path d="M9 11h11M9 14h11M9 17h11M9 20h11" stroke="#6f94c0" />
          <rect x="0" y="2" width="12" height="10" fill="#f3f6f3" stroke="#7a9a7a" strokeWidth="0.600" />
          {icon === "xls" ? (
            <path d="M3 4l6 6M9 4l-6 6" stroke="#1f7a32" strokeWidth="2" />
          ) : (
            <path d="M2 4l2 6 2-5 2 5 2-6" fill="none" stroke="#2a5bb8" strokeWidth="1.600" />
          )}
        </>
      )}
      {icon === "pic" && (
        <>
          <rect x="1" y="2" width="22" height="20" rx="2" fill="#a8c8e4" />
          <path d="M3 4h18v16H3z" fill="#2a76b8" />
          <path d="M3 11q9-5 18 0V7H3z" fill="#b8dcf0" />
          <path d="M3 16q9-5 18 1v3H3z" fill="#1c3f66" />
        </>
      )}
      {icon === "genesis" && (
        <>
          <path d="M1 2h9v6H3z" fill="#28a8b8" />
          <ellipse cx="13" cy="14" rx="10" ry="8.500" fill="#178c98" />
          <circle cx="13" cy="14" r="5.500" fill="none" stroke="#8fe08a" strokeWidth="1.600" />
          <circle cx="13" cy="14" r="2.500" fill="#d8f0a0" />
        </>
      )}
    </svg>
  );
}

function Taskbar() {
  return (
    <nav className={clsx(UI, "flex h-10 shrink-0 bg-[#101010] text-[12px] text-white")}>
      <button type="button" aria-label="Start" className="grid w-12 place-items-center">
        <svg viewBox="0 0 16 16" className="h-4 w-4">
          <path d="M0 2l7-1v6.500H0zM8 1l8-1v7.500H8zM0 8.500h7V15l-7-1zM8 8.500h8V16l-8-1z" fill="#fff" />
        </svg>
      </button>
      <div className="mx-[6px] my-[10px] w-1 border-x border-[#555]" />
      <div className="ml-[6px] flex min-w-0 flex-1">
        {TASKS.map((t, i) => (
          <button
            key={i}
            type="button"
            className={clsx("relative flex min-w-0 flex-1 items-center gap-[5px] pl-2 whitespace-nowrap", t.active && "bg-[#363636]")}
          >
            <TaskGlyph icon={t.icon} />
            <span className="flex-1 overflow-hidden text-left">{t.label}</span>
            <span className={clsx("absolute bottom-0 h-[2px] bg-[#76b9ed]", t.active ? "inset-x-0" : "inset-x-1")} />
          </button>
        ))}
      </div>
      <div className="flex w-[309px] items-center justify-end gap-[11px] leading-[17px]">
        <p className="text-center">
          26℃
          <br />
          CPU温度
        </p>
        <svg viewBox="0 0 12 8" className="ml-1 h-2 w-3"><path d="M1 7l5-5 5 5" fill="none" stroke="#fff" strokeWidth="1.300" /></svg>
        <svg viewBox="0 0 16 18" className="h-[18px] w-4">
          <path d="M2 1l11 16M14 1L2 17" stroke="#c9a0d0" strokeWidth="4" />
          <path d="M2 1l11 16M14 1L2 17" stroke="#8a2090" strokeWidth="2.600" />
        </svg>
        <span className="text-[14px]">英</span>
        <svg viewBox="0 0 16 18" className="mx-1 h-[18px] w-4">
          <path d="M2 2l13-2-1 16-13 2z" fill="#30b030" />
          <path d="M12 4c-8-1-8 4-4 4.500s4 5-4 4" fill="none" stroke="#fff" strokeWidth="2.400" />
        </svg>
        <p className="text-center">
          19:59
          <br />
          2025/12/10
        </p>
        <svg viewBox="0 0 24 26" className="mr-[2px] ml-[6px] h-[26px] w-6">
          <path d="M1 2h16v14H9l-4 4v-4H1z" fill="#fff" />
          <path d="M4 6h10M4 9h10M4 12h6" stroke="#101010" />
          <circle cx="16" cy="17" r="7.500" fill="#303030" stroke="#999" />
          <text x="16" y="21" textAnchor="middle" fontSize="11" fill="#fff" fontFamily="Open Sans, sans-serif">1</text>
        </svg>
        <span className="h-full w-[5px] border-l border-[#555]" />
      </div>
    </nav>
  );
}

export default function App() {
  return (
    <div className="relative flex h-screen min-h-[1152px] flex-col overflow-hidden bg-[#404040] text-black">
      <div className="flex min-h-0 flex-1 pt-px">
        {/* edge of the window lying underneath */}
        <div className="flex w-2 shrink-0 flex-col border-r border-black/50 bg-[#2e6e5c]">
          <div className="h-6 bg-[#c8c8c8]" />
          <div className="h-14 bg-[#7ba9a9]" />
          <div className="h-[70px] border-y border-black bg-[#3f9c84]" />
          <div className="flex-1" />
          <div className="h-[410px] bg-[#3f9c84]" />
          <div className="h-8 border-y border-black bg-[#c4c49c]" />
          <div className="h-9 bg-[#7ba9a9]" />
        </div>
        <main className="flex min-w-0 flex-1 flex-col border-l border-[#567f7f]">
          <MainHeader />
          <div className="flex min-h-0 flex-1">
            <LayerPanel />
            <BoardCanvas />
            <RightDock />
          </div>
          <FootBar />
        </main>
      </div>
      <Taskbar />

      <ResultsViewer />
      <ChecklistEditor />
      <ResultsHistogram />
      <MeasurePopup />
    </div>
  );
}
